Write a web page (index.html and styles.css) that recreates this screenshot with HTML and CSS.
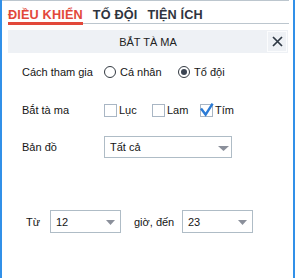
FILE: index.html
```html
<!DOCTYPE html>
<html lang="vi">
<head>
<meta charset="utf-8">
<link rel="stylesheet" href="styles.css">
</head>
<body>
<div class="frame">
  <div class="panel">
    <div class="tabs">
      <div class="tab active">ĐIỀU KHIỂN</div>
      <div class="tab">TỐ ĐỘI</div>
      <div class="tab">TIỆN ÍCH</div>
    </div>
    <div class="titlebar">
      <span class="title">BẮT TÀ MA</span>
      <button class="close" aria-label="Đóng">
        <svg width="11" height="11" viewBox="0 0 11 11"><path d="M1 1 L10 10 M10 1 L1 10" stroke="#2f3945" stroke-width="1.7" fill="none"/></svg>
      </button>
    </div>
    <div class="form">
      <div class="row r1">
        <span class="label">Cách tham gia</span>
        <span class="opt opt-radio"><span class="radio"></span><span>Cá nhân</span></span>
        <span class="opt"><span class="radio on"><span class="dot"></span></span><span>Tổ đội</span></span>
      </div>
      <div class="row r2">
        <span class="label">Bắt tà ma</span>
        <span class="opt opt-check"><span class="check"></span><span>Lục</span></span>
        <span class="opt opt-check"><span class="check"></span><span>Lam</span></span>
        <span class="opt"><span class="check on"><svg class="tick" width="16" height="16" viewBox="0 0 16 16"><path d="M2 6.6 L6.6 12.6 L13.6 1.6" stroke="#2b7bd6" stroke-width="2.4" fill="none" stroke-linejoin="miter"/></svg></span><span>Tím</span></span>
      </div>
      <div class="row r3">
        <span class="label">Bản đồ</span>
        <div class="select wide"><span>Tất cả</span><svg class="arrow arrow-wide" width="11" height="5" viewBox="0 0 11 5"><path d="M0 0 H11 L5.5 5 Z" fill="#8b909b"/></svg></div>
      </div>
      <div class="row r4">
        <span class="label-small">Từ</span>
        <div class="select short"><span>12</span><svg class="arrow" width="9" height="5" viewBox="0 0 9 5"><path d="M0 0 H9 L4.5 5 Z" fill="#8b909b"/></svg></div>
        <span class="mid">giờ, đến</span>
        <div class="select short"><span>23</span><svg class="arrow" width="9" height="5" viewBox="0 0 9 5"><path d="M0 0 H9 L4.5 5 Z" fill="#8b909b"/></svg></div>
      </div>
    </div>
  </div>
</div>
</body>
</html>
```

FILE: styles.css
```css
* { box-sizing: border-box; }
html, body { margin: 0; padding: 0; background: #ffffff; }
body {
  font-family: "Liberation Sans", Arial, sans-serif;
  font-size: 11px;
  color: #151515;
}
.frame {
  width: 295px;
  height: 278px;
  border-left: 2px solid #3190e8;
  border-right: 2px solid #3190e8;
}
.panel {
  width: 287px;
  border-top: 1px solid #bcc6ce;
  padding-left: 6px;
}
.tabs {
  display: flex;
  align-items: flex-end;
  gap: 10px;
  padding-top: 7px;
  border-bottom: 1px solid #bcc6ce;
}
.tab {
  font-size: 12.7px;
  font-weight: bold;
  line-height: 14px;
  letter-spacing: 0.15px;
  color: #2f3440;
  border-bottom: 3px solid transparent;
  margin-bottom: -2px;
}
.tab.active {
  color: #e2483a;
  border-bottom-color: #e2483a;
}
.titlebar {
  margin-top: 6px;
  width: 280px;
  height: 23px;
  background: #eef1f5;
  padding: 1px;
  display: grid;
  grid-template-columns: 20px 1fr 20px;
  grid-template-rows: 21px;
}
.title {
  grid-column: 2;
  text-align: center;
  line-height: 22px;
  color: #222;
}
.close {
  grid-column: 3;
  width: 20px;
  height: 21px;
  padding: 0;
  margin: 0;
  border: 1px solid #fbfcfd;
  background: transparent;
  display: flex;
  align-items: center;
  justify-content: center;
}
.form { padding-left: 14px; }
.row {
  display: flex;
  align-items: center;
  height: 22px;
}
.r1 { margin-top: 8px; }
.r2 { margin-top: 16px; }
.r3 { margin-top: 15px; }
.r4 { margin-top: 52px; height: 23px; }
.label { width: 82px; }
.label-small { width: 28px; padding-left: 4px; }
.opt { display: flex; align-items: center; }
.opt-radio { width: 74px; }
.opt-check { width: 48px; }
.radio {
  width: 12px;
  height: 12px;
  border: 1px solid #333a42;
  border-radius: 50%;
  margin-right: 4px;
  display: flex;
  align-items: center;
  justify-content: center;
}
.dot {
  width: 6px;
  height: 6px;
  border-radius: 50%;
  background: #3b4452;
}
.check {
  position: relative;
  width: 13px;
  height: 13px;
  border: 1px solid #a9b6c4;
  background: #fff;
  margin-right: 2px;
  margin-top: 1px;
}
.tick {
  position: absolute;
  left: -2px;
  top: -3px;
}
.select {
  display: flex;
  align-items: center;
  height: 22px;
  border: 1px solid #afbcc6;
  padding-left: 5px;
  color: #151515;
}
.select.wide { width: 128px; }
.select.short { width: 71px; height: 23px; }
.arrow { margin-left: auto; margin-right: 5px; margin-top: 2px; }
.arrow-wide { margin-right: 2px; }
.mid { margin-left: 13px; width: 48px; }
```
